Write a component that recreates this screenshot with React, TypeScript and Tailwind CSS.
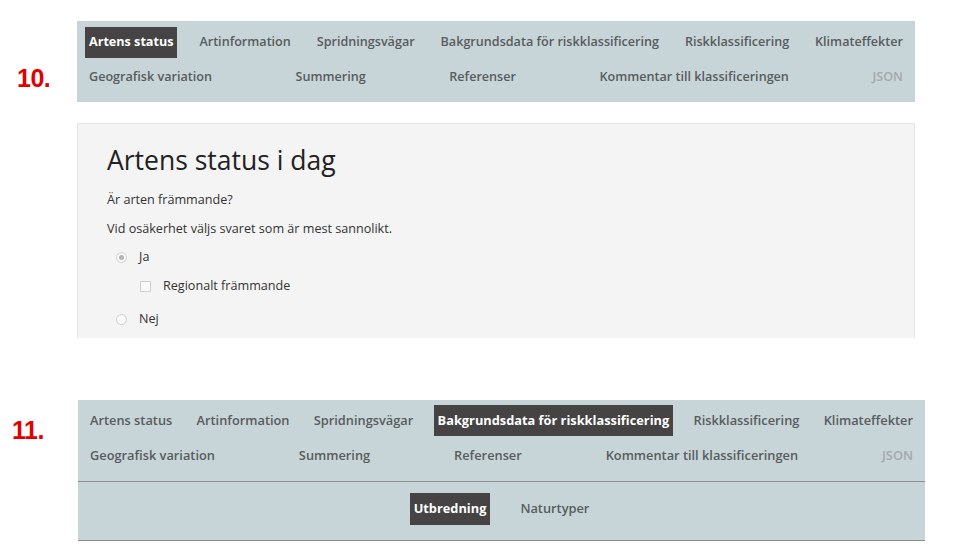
import React from "react";

const row1 = [
  "Artens status",
  "Artinformation",
  "Spridningsvägar",
  "Bakgrundsdata för riskklassificering",
  "Riskklassificering",
  "Klimateffekter",
];
const row2 = [
  "Geografisk variation",
  "Summering",
  "Referenser",
  "Kommentar till klassificeringen",
  "JSON",
];

function Item({ label, active, muted }: { label: string; active?: boolean; muted?: boolean }) {
  return (
    <div
      className={
        "flex items-center px-1 h-full whitespace-nowrap " +
        (active
          ? "bg-[#454343] text-white font-bold"
          : muted
          ? "text-[#a3a9ab] font-semibold"
          : "text-[#575c5e] font-semibold")
      }
    >
      {label}
    </div>
  );
}

function Nav({ active }: { active: number }) {
  return (
    <div className="flex flex-col">
      <div className="flex justify-between h-[31px]">
        {row1.map((l, i) => (
          <Item key={l} label={l} active={i === active} />
        ))}
      </div>
      <div className="flex justify-between h-[31px] mt-[4px]">
        {row2.map((l) => (
          <Item key={l} label={l} muted={l === "JSON"} />
        ))}
      </div>
    </div>
  );
}

function Radio({ checked }: { checked?: boolean }) {
  return (
    <span className="w-[11px] h-[11px] rounded-full border border-[#cfcfcf] bg-[#fafafa] flex items-center justify-center">
      {checked && <span className="w-[5px] h-[5px] rounded-full bg-[#b5b5b5]" />}
    </span>
  );
}

export default function App() {
  return (
    <div
      className="w-[958px] h-[553px] bg-white overflow-hidden text-[12.6px]"
      style={{ fontFamily: '"Open Sans", "Noto Sans", sans-serif' }}
    >
      {/* Section 10 */}
      <div className="flex pt-[21px]">
        <div className="w-[77px] pl-[17px] pt-[45px]">
          <span
            className="text-[#e30000] font-bold text-[25px] leading-none tracking-[-0.5px]"
            style={{ fontFamily: '"Liberation Sans", Arial, sans-serif' }}
          >
            10.
          </span>
        </div>
        <div className="w-[838px]">
          <div className="bg-[#c8d5d8] h-[81px] px-2 pt-[6px]">
            <Nav active={0} />
          </div>
          <div className="mt-[21px] h-[215px] bg-[#f4f4f4] border border-b-0 border-[#e4e4e4] pl-[29px] pt-[19px] text-[#333]">
            <h1 className="text-[26.5px] leading-[34px] text-[#222] font-medium">Artens status i dag</h1>
            <p className="mt-[14px] leading-[18px]">Är arten främmande?</p>
            <p className="mt-[11px] leading-[18px]">Vid osäkerhet väljs svaret som är mest sannolikt.</p>
            <div className="mt-[10px] flex items-center gap-[12px] pl-[9px] h-[18px]">
              <Radio checked />
              <span>Ja</span>
            </div>
            <div className="mt-[11px] flex items-center gap-[12px] pl-[33px] h-[18px]">
              <span className="w-[11px] h-[11px] border border-[#cfcfcf] bg-[#fafafa]" />
              <span>Regionalt främmande</span>
            </div>
            <div className="mt-[15px] flex items-center gap-[12px] pl-[9px] h-[18px]">
              <Radio />
              <span>Nej</span>
            </div>
          </div>
        </div>
      </div>

      {/* Section 11 */}
      <div className="flex mt-[62px]">
        <div className="w-[78px] pl-[12px] pt-[18px]">
          <span
            className="text-[#e30000] font-bold text-[25px] leading-none tracking-[-0.5px]"
            style={{ fontFamily: '"Liberation Sans", Arial, sans-serif' }}
          >
            11.
          </span>
        </div>
        <div className="w-[847px] bg-[#c8d5d8]">
          <div className="px-2 pt-[5px] h-[82px] border-b border-[#8c8f90] text-[12.8px]">
            <Nav active={3} />
          </div>
          <div className="h-[59px] flex justify-center items-center gap-[26px] border-b border-[#8c8f90] text-[12.8px]">
            <div className="h-[32px] flex -mt-[4px]">
              <Item label="Utbredning" active />
            </div>
            <div className="h-[32px] flex -mt-[4px]">
              <Item label="Naturtyper" />
            </div>
          </div>
        </div>
      </div>
    </div>
  );
}
